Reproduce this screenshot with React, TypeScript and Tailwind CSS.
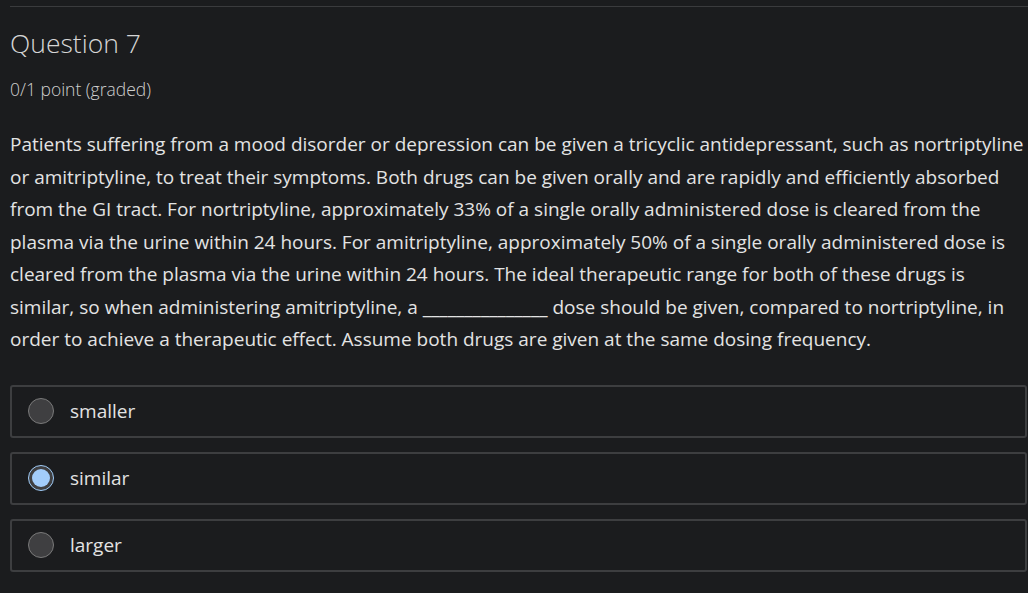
export default function App() {
  const options = [
    { id: "smaller", label: "smaller", checked: false },
    { id: "similar", label: "similar", checked: true },
    { id: "larger", label: "larger", checked: false },
  ];

  return (
    <main
      className="min-h-[593px] w-[1028px] overflow-hidden bg-[#1b1c1e] pl-[10px] pt-[6px]"
      style={{ fontFamily: '"Open Sans", "Noto Sans", sans-serif' }}
    >
      <div className="h-px w-full bg-[#3a3b3d]" />

      <h2 className="mt-[20px] text-[26.5px] font-light leading-[32px] text-[#d6d6d6]">
        Question 7
      </h2>
      <p className="mt-[19px] text-[17.5px] font-light leading-[22px] text-[#cfcfcf]">
        0/1 point (graded)
      </p>

      <p className="mt-[28px] w-[1018px] text-[19px] leading-[32.5px] text-[#e3e3e3]">
        Patients suffering from a mood disorder or depression can be given a tricyclic antidepressant, such as nortriptyline
        <br />
        or amitriptyline, to treat their symptoms. Both drugs can be given orally and are rapidly and efficiently absorbed
        <br />
        from the GI tract. For nortriptyline, approximately 33% of a single orally administered dose is cleared from the
        <br />
        plasma via the urine within 24 hours. For amitriptyline, approximately 50% of a single orally administered dose is
        <br />
        cleared from the plasma via the urine within 24 hours. The ideal therapeutic range for both of these drugs is
        <br />
        similar, so when administering amitriptyline, a _______________ dose should be given, compared to nortriptyline, in
        <br />
        order to achieve a therapeutic effect. Assume both drugs are given at the same dosing frequency.
      </p>

      <div className="mt-[29px] flex w-[1017px] flex-col gap-[14px]">
        {options.map((option) => (
          <label
            key={option.id}
            className="flex h-[53px] items-center gap-[16px] rounded-[3px] border-2 border-[#3d3e40] pl-[16px]"
          >
            {option.checked ? (
              <span className="flex h-[26px] w-[26px] items-center justify-center rounded-full border-[1.5px] border-[#9fcbf7] bg-[#3f3f41]">
                <span className="h-[18px] w-[18px] rounded-full bg-[#a3cdfb]" />
              </span>
            ) : (
              <span className="h-[26px] w-[26px] rounded-full border border-[#7a7a7a] bg-[#3f3f41]" />
            )}
            <span className="text-[19px] text-[#e3e3e3]">{option.label}</span>
          </label>
        ))}
      </div>
    </main>
  );
}
